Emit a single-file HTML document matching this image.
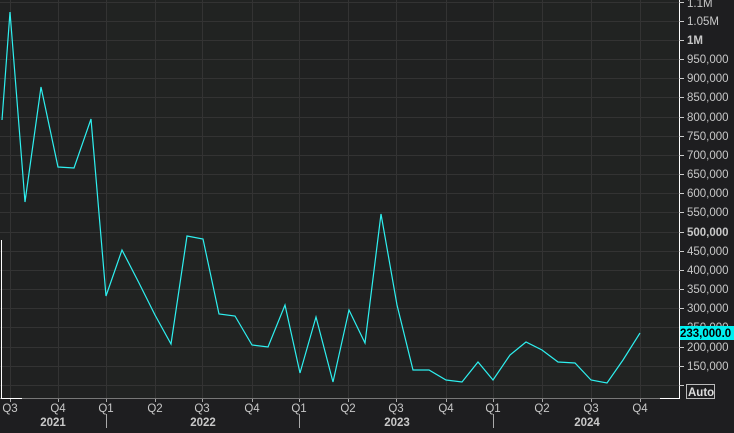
<!DOCTYPE html>
<html><head><style>
body{margin:0;width:734px;height:428px;background:#1e1e20;overflow:hidden;font-family:"Liberation Sans",sans-serif;}
svg text{font-family:"Liberation Sans",sans-serif;font-size:11.5px;fill:#c8c8c8}
</style></head><body>
<svg width="734" height="428" xmlns="http://www.w3.org/2000/svg">
<rect x="0" y="0" width="679" height="398" fill="#202121"/>
<rect x="106" y="0" width="194" height="398" fill="#212322"/>
<rect x="493" y="0" width="186" height="398" fill="#212322"/>
<g stroke="#333" stroke-width="1">
<line x1="0" x2="679" y1="2.5" y2="2.5"/><line x1="0" x2="679" y1="21.5" y2="21.5"/><line x1="0" x2="679" y1="40.5" y2="40.5"/><line x1="0" x2="679" y1="59.5" y2="59.5"/><line x1="0" x2="679" y1="78.5" y2="78.5"/><line x1="0" x2="679" y1="97.5" y2="97.5"/><line x1="0" x2="679" y1="117.5" y2="117.5"/><line x1="0" x2="679" y1="136.5" y2="136.5"/><line x1="0" x2="679" y1="155.5" y2="155.5"/><line x1="0" x2="679" y1="174.5" y2="174.5"/><line x1="0" x2="679" y1="193.5" y2="193.5"/><line x1="0" x2="679" y1="212.5" y2="212.5"/><line x1="0" x2="679" y1="232.5" y2="232.5"/><line x1="0" x2="679" y1="251.5" y2="251.5"/><line x1="0" x2="679" y1="270.5" y2="270.5"/><line x1="0" x2="679" y1="289.5" y2="289.5"/><line x1="0" x2="679" y1="308.5" y2="308.5"/><line x1="0" x2="679" y1="327.5" y2="327.5"/><line x1="0" x2="679" y1="347.5" y2="347.5"/><line x1="0" x2="679" y1="366.5" y2="366.5"/><line x1="0" x2="679" y1="385.5" y2="385.5"/>
<line y1="0" y2="398" x1="10.5" x2="10.5"/><line y1="0" y2="398" x1="58.5" x2="58.5"/><line y1="0" y2="398" x1="106.5" x2="106.5"/><line y1="0" y2="398" x1="155.5" x2="155.5"/><line y1="0" y2="398" x1="202.5" x2="202.5"/><line y1="0" y2="398" x1="252.5" x2="252.5"/><line y1="0" y2="398" x1="299.5" x2="299.5"/><line y1="0" y2="398" x1="348.5" x2="348.5"/><line y1="0" y2="398" x1="396.5" x2="396.5"/><line y1="0" y2="398" x1="446.5" x2="446.5"/><line y1="0" y2="398" x1="493.5" x2="493.5"/><line y1="0" y2="398" x1="542.5" x2="542.5"/><line y1="0" y2="398" x1="591.5" x2="591.5"/><line y1="0" y2="398" x1="640.5" x2="640.5"/>
</g>
<line x1="0" x2="679" y1="398.5" y2="398.5" stroke="#777"/>
<line x1="1" x2="22" y1="398.5" y2="398.5" stroke="#fff"/>
<line x1="1.5" x2="1.5" y1="240" y2="398" stroke="#fff"/>
<line x1="660" x2="679" y1="398.5" y2="398.5" stroke="#fff"/>
<line x1="679.5" x2="679.5" y1="0" y2="399" stroke="#fff"/>
<g stroke="#ccc"><line x1="679" x2="684" y1="2.5" y2="2.5"/><line x1="679" x2="684" y1="21.5" y2="21.5"/><line x1="679" x2="684" y1="40.5" y2="40.5"/><line x1="679" x2="684" y1="59.5" y2="59.5"/><line x1="679" x2="684" y1="78.5" y2="78.5"/><line x1="679" x2="684" y1="97.5" y2="97.5"/><line x1="679" x2="684" y1="117.5" y2="117.5"/><line x1="679" x2="684" y1="136.5" y2="136.5"/><line x1="679" x2="684" y1="155.5" y2="155.5"/><line x1="679" x2="684" y1="174.5" y2="174.5"/><line x1="679" x2="684" y1="193.5" y2="193.5"/><line x1="679" x2="684" y1="212.5" y2="212.5"/><line x1="679" x2="684" y1="232.5" y2="232.5"/><line x1="679" x2="684" y1="251.5" y2="251.5"/><line x1="679" x2="684" y1="270.5" y2="270.5"/><line x1="679" x2="684" y1="289.5" y2="289.5"/><line x1="679" x2="684" y1="308.5" y2="308.5"/><line x1="679" x2="684" y1="347.5" y2="347.5"/><line x1="679" x2="684" y1="366.5" y2="366.5"/><line x1="679" x2="684" y1="385.5" y2="385.5"/></g>
<g>
<text x="687" y="7">1.1M</text><text x="687" y="25">1.05M</text><text x="687" y="44" font-weight="bold">1M</text><text x="687" y="63">950,000</text><text x="687" y="82">900,000</text><text x="687" y="101">850,000</text><text x="687" y="121">800,000</text><text x="687" y="140">750,000</text><text x="687" y="159">700,000</text><text x="687" y="178">650,000</text><text x="687" y="197">600,000</text><text x="687" y="216">550,000</text><text x="687" y="236" font-weight="bold">500,000</text><text x="687" y="255">450,000</text><text x="687" y="274">400,000</text><text x="687" y="293">350,000</text><text x="687" y="312">300,000</text><text x="687" y="331">250,000</text><text x="687" y="351">200,000</text><text x="687" y="370">150,000</text>
</g>
<rect x="680" y="326" width="54" height="14" fill="#00f0f0"/>
<text x="680" y="337" font-weight="bold" style="fill:#000;font-size:11.5px">233,000.0</text>
<rect x="686.5" y="384.5" width="28" height="14" fill="none" stroke="#bbb"/>
<text x="688" y="396" font-weight="bold" style="fill:#ddd">Auto</text>
<polyline fill="none" stroke="#2ef0f0" stroke-width="1.2" points="2,120 10,12 25,202 41,87 58,167 74,168 91,119 106,296 122,250 139,283 155,315 171,344 187,236 203,239 219,314 235,316 252,345 268,347 285,305 300,373 316,317 333,382 349,310 365,343 381,214 397,305 413,370 429,370 446,380 462,382 478,362 493,380 510,355 526,342 542,350 558,362 575,363 591,380 607,383 623,360 640,333"/>
<g stroke="#aaa"><line x1="10.5" x2="10.5" y1="399" y2="402"/><line x1="58.5" x2="58.5" y1="399" y2="402"/><line x1="106.5" x2="106.5" y1="399" y2="402"/><line x1="155.5" x2="155.5" y1="399" y2="402"/><line x1="202.5" x2="202.5" y1="399" y2="402"/><line x1="252.5" x2="252.5" y1="399" y2="402"/><line x1="299.5" x2="299.5" y1="399" y2="402"/><line x1="348.5" x2="348.5" y1="399" y2="402"/><line x1="396.5" x2="396.5" y1="399" y2="402"/><line x1="446.5" x2="446.5" y1="399" y2="402"/><line x1="493.5" x2="493.5" y1="399" y2="402"/><line x1="542.5" x2="542.5" y1="399" y2="402"/><line x1="591.5" x2="591.5" y1="399" y2="402"/><line x1="640.5" x2="640.5" y1="399" y2="402"/>
<line x1="106.5" x2="106.5" y1="414" y2="428"/><line x1="299.5" x2="299.5" y1="414" y2="428"/><line x1="493.5" x2="493.5" y1="414" y2="428"/></g>
<g text-anchor="middle">
<text x="10" y="412">Q3</text><text x="58" y="412">Q4</text><text x="106" y="412">Q1</text><text x="155" y="412">Q2</text><text x="202" y="412">Q3</text><text x="252" y="412">Q4</text><text x="299" y="412">Q1</text><text x="348" y="412">Q2</text><text x="396" y="412">Q3</text><text x="446" y="412">Q4</text><text x="493" y="412">Q1</text><text x="542" y="412">Q2</text><text x="591" y="412">Q3</text><text x="640" y="412">Q4</text>
<text x="53" y="426" font-weight="bold">2021</text><text x="203" y="426" font-weight="bold">2022</text><text x="397" y="426" font-weight="bold">2023</text><text x="587" y="426" font-weight="bold">2024</text>
</g>
</svg>
</body></html>
